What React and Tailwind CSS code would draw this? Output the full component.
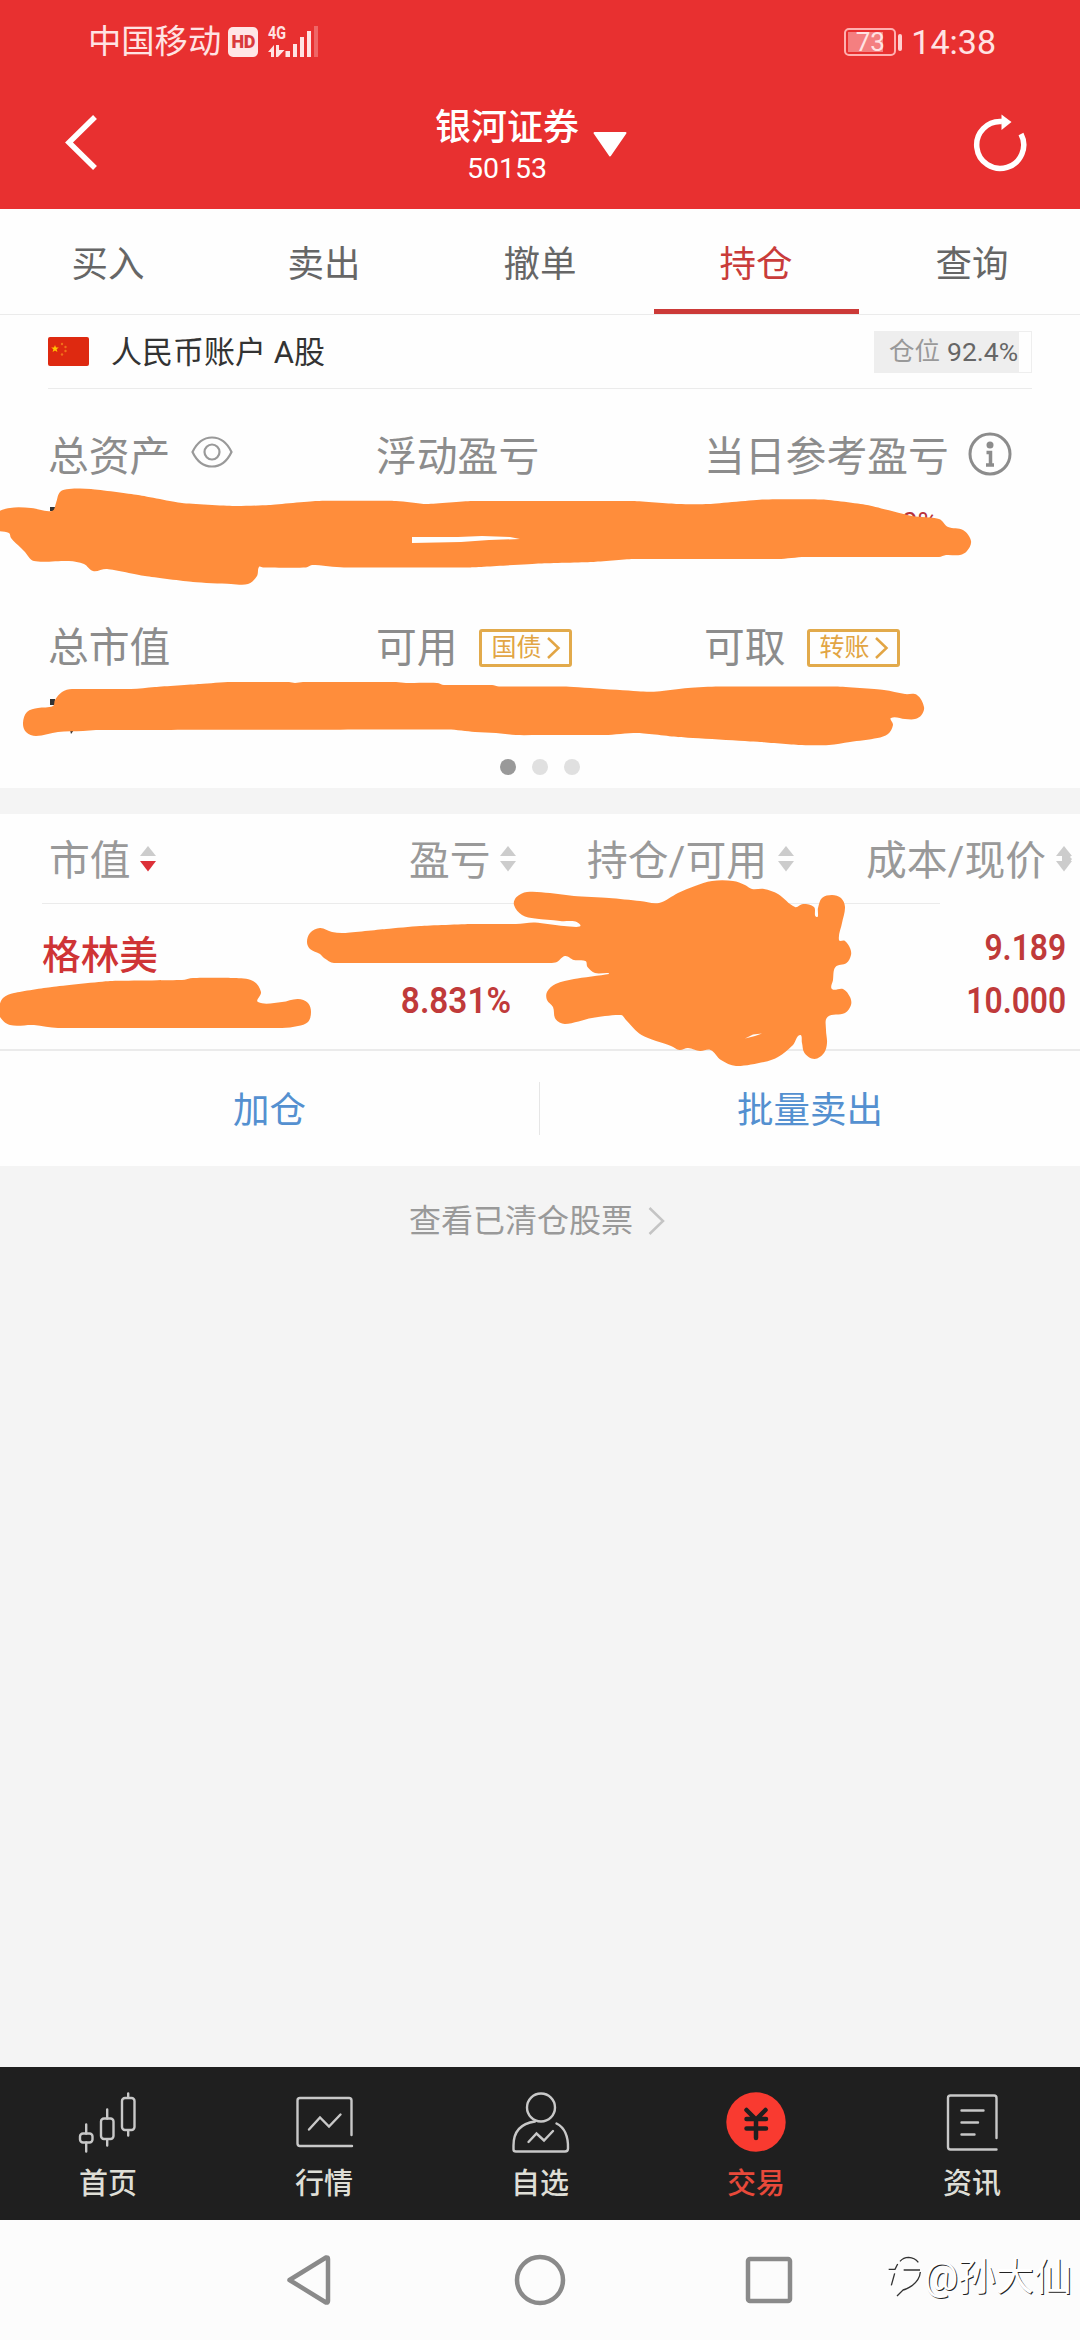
import React from 'react';
import clsx from 'clsx';

const tabs = ['买入', '卖出', '撤单', '持仓', '查询'];

// closed outlines of the pen marks, in page pixels
const marks = [
	[[-4, 514], [10, 508], [31, 508], [52, 511], [56, 503], [60, 492], [69, 489], [91, 489], [138, 495], [182, 503], [234, 506], [269, 505], [317, 501], [396, 501], [427, 504], [472, 501], [633, 501], [678, 504], [709, 504], [764, 499.5], [822, 499.5], [867, 505], [912, 516], [939, 519], [948, 527], [963, 530], [971, 541], [967, 551], [960, 555], [946, 555], [939, 557], [805, 557], [778, 559], [633, 559], [592, 562], [540, 563.5], [468, 567.5], [344, 567.5], [312, 565], [306, 567.5], [263, 567.5], [259, 567], [257, 576], [248, 584], [231, 584], [193, 582], [145, 576], [107, 569], [93, 571], [84, 564], [69, 561], [34, 561], [24, 551], [21, 548], [11, 538], [9, 533], [-4, 529]],
	[[23, 723], [27, 712], [38, 708], [53, 706], [55, 700], [62, 692], [72, 689], [131, 689], [155, 687], [200, 684], [231, 682], [289, 682], [295, 683], [303, 682], [396, 682], [406, 683], [437, 683], [444, 685], [492, 685], [499, 686.5], [564, 686.5], [643, 691.5], [657, 691.5], [688, 688], [719, 686.5], [836, 686.5], [884, 690], [905, 694], [917, 695], [924, 707], [921.5, 715], [915, 719], [905, 719], [891, 718], [893, 725], [888, 734], [877.5, 738], [850, 742], [829, 745], [802, 745], [760, 742], [678, 737], [638, 733], [605, 735], [540, 735], [516, 735], [496, 733], [475, 732], [448, 729.5], [96, 730], [83, 731], [58, 732], [36, 736], [26, 732]],
	[[-1, 1008], [3, 998], [14, 993], [52, 987], [110, 981], [182, 980], [193, 978], [234, 978], [253, 981], [261, 992], [258, 1002], [282, 1002], [298, 999], [308, 1003], [311, 1012], [308, 1022], [298, 1026], [282, 1028], [58, 1028], [34, 1025], [10, 1025], [0, 1017]],
	[[307, 942], [310, 933], [320, 928], [332, 932], [344, 933], [386, 929], [420, 926], [472, 924], [516, 924], [535, 922.5], [564, 926], [580, 924.5], [560, 921], [535, 918.5], [522, 915], [514, 905], [516.5, 897], [527, 892], [550, 893], [574, 896], [609, 898], [640, 901], [659, 903], [678, 893], [695, 886], [712, 881], [733, 881], [745, 885], [752, 889], [764, 889], [778, 894], [795, 907], [803, 904], [814, 907], [816.5, 917], [818, 908], [822, 898], [832, 895], [841, 898], [845, 907], [842, 923], [839, 940], [845, 941], [850, 948], [851, 955], [846.5, 963], [835.5, 967], [833, 980], [832, 989], [843, 989], [850, 997], [851, 1005], [845, 1013], [827.5, 1017], [826, 1030], [827, 1043], [824, 1053], [814.5, 1059], [804.5, 1053], [802, 1043], [800, 1035], [793, 1045], [778, 1057], [764, 1062], [736, 1066], [721, 1060], [710.5, 1050], [700, 1051], [688, 1048], [679.5, 1050], [671, 1046], [641.5, 1035], [626, 1020], [621, 1015], [592, 1018], [565, 1024], [555.5, 1019], [553, 1007], [547, 1000], [547, 992], [555.5, 984], [574, 979], [609, 974], [608, 973], [595, 973], [587.5, 967], [585.5, 961], [574, 960], [565, 956], [557, 962], [550, 963], [334, 963], [324, 958], [320, 954], [310, 949]]
];

const gaps = [
	'M412 537H458L482 536L510 537L520 539L489 540L461 542L412 543Z',
	'M745 1038.5L753 1034.5L762 1033.5L755 1036Z'
];

function smooth(points) {
	const n = points.length;
	let d = `M${points[0][0]} ${points[0][1]}`;
	for (let i = 0; i < n; i++) {
		const a = points[(i + n - 1) % n];
		const b = points[i];
		const c = points[(i + 1) % n];
		const e = points[(i + 2) % n];
		// keep the handles short so long and short segments join without bumps
		const len = Math.hypot(c[0] - b[0], c[1] - b[1]);
		const l1 = Math.hypot(c[0] - a[0], c[1] - a[1]) || 1;
		const l2 = Math.hypot(e[0] - b[0], e[1] - b[1]) || 1;
		const k = Math.min(len * 0.33, 8);
		d += `C${b[0] + ((c[0] - a[0]) / l1) * k} ${b[1] + ((c[1] - a[1]) / l1) * k} ${c[0] - ((e[0] - b[0]) / l2) * k} ${c[1] - ((e[1] - b[1]) / l2) * k} ${c[0]} ${c[1]}`;
	}
	return d + 'Z';
}

function PenMarks() {
	return (
		<svg className="pointer-events-none absolute top-0 left-0" width="1080" height="1100" viewBox="0 0 1080 1100">
			<path d="M50 507H58V511H50ZM50 699H55V705H50ZM70 730H74L71 734Z" fill="#333" />
			{marks.map((points, i) => (
				<path key={i} d={smooth(points)} fill="#ff8d3b" />
			))}
			{gaps.map((d) => (
				<path key={d} d={d} fill="#fefefe" />
			))}
		</svg>
	);
}

function StatusBar() {
	return (
		<div className="flex h-[84px] items-center pr-[84px] pl-[88px] text-[#ffe3e3]">
			<span className="text-[33.3px]">中国移动</span>
			<div className="ml-[7px] flex h-[30px] w-[30px] items-center justify-center rounded-[5px] bg-[#ffe6e6] text-[18px] leading-none font-black tracking-[-0.5px] text-[#d93a3c]">
				HD
			</div>
			<svg className="ml-[10px] overflow-visible" width="52" height="46" viewBox="268 18 52 46" fill="currentColor">
				<text x="268" y="38" fontSize="18" fontWeight="700" textLength="18" lengthAdjust="spacingAndGlyphs">
					4G
				</text>
				<path d="M268 51L274 44V56H271V51ZM276 44H279V49L284.500 49L278 56H276Z" />
				<path d="M285.500 50H290V56H285.500ZM293 43H297V56H293ZM300 36H304V56H300ZM307 30H311V56H307Z" />
				<path d="M314 25H318V56H314Z" opacity=".3" />
			</svg>
			<div className="ml-auto flex items-center">
				<div className="relative flex h-[28px] w-[52px] items-center justify-center rounded-[5px] border-2 border-[#ffb0b0]">
					<div className="absolute top-[2px] left-[2px] h-[20px] w-[35px] bg-[#f47f80]" />
					<span className="relative text-[26px] leading-none">73</span>
				</div>
				<div className="ml-[2px] h-[17px] w-[4px] rounded-full bg-[#ffd0d0]" />
				<span className="ml-[9px] text-[34px]">14:38</span>
			</div>
		</div>
	);
}

function Header() {
	return (
		<div className="flex h-[125px] items-start px-[54px] text-white">
			<svg className="mt-[29px] ml-[9px]" width="36" height="60" viewBox="62 113 36 60" fill="none" stroke="currentColor" strokeWidth="5.500">
				<path d="M94 117L68 142.500L94 168" />
			</svg>
			<div className="relative mt-[23px] ml-[336px] text-center">
				<div className="text-[36px] leading-[42px] font-medium">银河证券</div>
				<div className="mt-[2px] text-[28.500px] leading-[36px]">50153</div>
				<svg className="absolute top-[24px] left-[158px]" width="34" height="26" viewBox="0 0 34 26">
					<path d="M1.500 2H32.500L17 24.500Z" fill="currentColor" stroke="currentColor" strokeWidth="2" strokeLinejoin="round" />
				</svg>
			</div>
			<svg className="mt-[28px] -mr-[2px] ml-auto" width="56" height="62" viewBox="971 112 56 62" fill="none" stroke="currentColor" strokeWidth="5.500">
				<path d="M1020 134A23.500 23.500 0 1 1 1001 121.500" />
				<path d="M1000.500 114.500L1010.500 122L1000.500 130Z" fill="currentColor" stroke="none" />
			</svg>
		</div>
	);
}

function Tabs() {
	return (
		<div className="flex h-[106px] border-b border-[#ebebeb] text-[36.5px] text-[#666]">
			{tabs.map((tab) => (
				<div key={tab} className={clsx('flex flex-1 flex-col items-center', tab === '持仓' && 'text-[#c93c3a]')}>
					<div className="flex h-[100px] items-center pt-[12px]">{tab}</div>
					{tab === '持仓' && <div className="h-[5px] w-[205px] bg-[#cc3a38]" />}
				</div>
			))}
		</div>
	);
}

function Flag() {
	return (
		<svg width="41" height="29" viewBox="0 0 41 29">
			<rect width="41" height="29" rx="2" fill="#de2910" />
			<path d="M7 8L8 10.600H10.800L8.600 12.300L9.400 15L7 13.400L4.600 15L5.400 12.300L3.200 10.600H6Z" fill="#ffc400" />
			<g fill="#f0701a">
				<circle cx="14" cy="7" r="1.200" />
				<circle cx="17.500" cy="10" r="1.200" />
				<circle cx="17.500" cy="14" r="1.200" />
				<circle cx="14" cy="17.500" r="1.200" />
			</g>
		</svg>
	);
}

function Account() {
	return (
		<div className="mx-[48px] flex h-[74px] items-center border-b border-[#ebebeb]">
			<Flag />
			<span className="mt-[3px] ml-[22px] text-[31px] text-[#333]">人民币账户 A股</span>
			<div className="ml-auto h-[42px] w-[158px] border border-[#eee]">
				<div className="flex h-full w-[144px] items-center bg-[#eee] pl-[14px] text-[25.5px] whitespace-nowrap text-[#999]">
					仓位<span className="ml-[7px] text-[26.500px] text-[#666]">92.4%</span>
				</div>
			</div>
		</div>
	);
}

function LinkBadge({ children }) {
	return (
		<div className="-mt-[3px] ml-[21px] flex h-[38px] w-[93px] items-center rounded-[3px] border-[3px] border-[#e2aa4b] pl-[10px] text-[25px] text-[#e2a544]">
			{children}
			<svg className="ml-[4px]" width="15" height="24" viewBox="0 0 15 24" fill="none" stroke="currentColor" strokeWidth="2.500">
				<path d="M2 2L12.500 12L2 22" />
			</svg>
		</div>
	);
}

function Summary() {
	return (
		<div className="h-[399px] pl-[48px]">
			<div className="flex h-[137px] items-center text-[40.8px] text-[#8c8c8c]">
				<div className="flex w-[328px] items-center">
					总资产
					<svg className="mb-[12px] ml-[21px]" width="42" height="32" viewBox="0 0 42 32" fill="none" stroke="#999" strokeWidth="2.200">
						<path d="M1.500 16C6 6.500 13 1.500 21 1.500S36 6.500 40.500 16C36 25.500 29 30.500 21 30.500S6 25.500 1.500 16Z" />
						<ellipse cx="21" cy="16" rx="7.500" ry="7.500" />
					</svg>
				</div>
				<div className="w-[328px]">浮动盈亏</div>
				<div className="flex items-center">
					当日参考盈亏
					<svg className="mb-[8px] ml-[19px]" width="44" height="44" viewBox="0 0 44 44" fill="none" stroke="#8c8c8c" strokeWidth="3">
						<circle cx="22" cy="22" r="20" />
						<circle cx="22" cy="13" r="3.500" fill="#8c8c8c" stroke="none" />
						<path d="M18.500 20.500H22.500V33M18 33H26" strokeWidth="3.500" />
					</svg>
				</div>
			</div>
			<div className="flex h-[56px] justify-end pr-[142px] text-[28px] leading-[28px] text-[#b8323a]">
				<span className="-mt-[17px]">0%</span>
			</div>
			<div className="flex h-[132px] items-center pt-[2px] text-[40.8px] text-[#8c8c8c]">
				<div className="w-[328px]">总市值</div>
				<div className="flex w-[328px] items-center">
					可用<LinkBadge>国债</LinkBadge>
				</div>
				<div className="flex items-center">
					可取<LinkBadge>转账</LinkBadge>
				</div>
			</div>
			<div className="mt-[45px] -ml-[48px] flex justify-center gap-[16px]">
				<i className="h-[16px] w-[16px] rounded-full bg-[#999]" />
				<i className="h-[16px] w-[16px] rounded-full bg-[#e0e0e0]" />
				<i className="h-[16px] w-[16px] rounded-full bg-[#e0e0e0]" />
			</div>
		</div>
	);
}

function Sort({ active, squeezed, className }) {
	return (
		<svg className={clsx('mb-[5px] shrink-0', className)} width="16" height="26" viewBox="0 0 16 26">
			<path d="M8 0L16 10H0Z" fill="#ccc" />
			<path d="M0 15H16L8 25.500Z" fill={active ? '#dc3038' : '#ccc'} />
			{squeezed && <path d="M6 8H14L15 10L14 11L16 13L14 16H6Z" fill="#ccc" />}
		</svg>
	);
}

function Holdings() {
	return (
		<div className="bg-[#fefefe]">
			<div className="flex h-[89px] items-center pt-[6px] text-[40.8px] whitespace-nowrap text-[#999]">
				<div className="flex w-[361px] items-center pl-[49px]">
					市值
					<Sort active className="ml-[9px]" />
				</div>
				<div className="flex w-[226px] items-center pl-[48px]">
					盈亏
					<Sort className="ml-[9px]" />
				</div>
				<div className="flex w-[279px] items-center">
					持仓/可用
					<Sort className="ml-[11px]" />
				</div>
				<div className="flex items-center">
					成本/现价
					<Sort squeezed className="ml-[10px]" />
				</div>
			</div>
			<div className="ml-[42px] h-px w-[898px] bg-[#ebebeb]" />
			<div className="flex h-[145px] text-[37px] font-semibold text-[#c03a3a]">
				<div className="mt-[30px] w-[360px] pl-[42px] text-[38.7px] leading-[44px] font-medium text-[#cf3435]">格林美</div>
				<div className="mt-[75px] w-[151px] origin-right scale-x-[.9] text-right leading-[44px]">8.831%</div>
				<div className="mt-[17px] mr-[14px] ml-auto origin-right scale-x-[.86] text-right leading-[53px]">
					<div>9.189</div>
					<div>10.000</div>
				</div>
			</div>
			<div className="flex h-[117px] items-center border-t-2 border-[#ebebeb] text-[36.5px] text-[#5490d0]">
				<div className="w-[539px] pt-[5px] text-center">加仓</div>
				<div className="h-[53px] w-px bg-[#e6e6e6]" />
				<div className="flex-1 pt-[5px] text-center">批量卖出</div>
			</div>
		</div>
	);
}

const navItems = [
	{
		label: '首页',
		icon: (
			<g transform="translate(-78.500 -2091.500)">
				<rect x="80.500" y="2133" width="12.500" height="9" rx="3" />
				<rect x="101.500" y="2118" width="12.500" height="20.500" rx="3" />
				<rect x="122.500" y="2097.500" width="12.500" height="32" rx="3" />
				<path d="M86.700 2124V2133M86.700 2142V2151M107.700 2109V2118M107.700 2139V2145M128.700 2093V2097M128.700 2130V2135" />
			</g>
		)
	},
	{
		label: '行情',
		icon: (
			<g transform="translate(-294 -2091.500)">
				<path d="M351.500 2134.500V2100Q351.500 2097.500 349 2097.500H300Q297.500 2097.500 297.500 2100V2143Q297.500 2145.500 300 2145.500H352" />
				<path d="M309 2129L320 2117L329 2126L340.500 2114" />
			</g>
		)
	},
	{
		label: '自选',
		icon: (
			<g transform="translate(-510 -2091.500)">
				<ellipse cx="541" cy="2107" rx="14" ry="14" />
				<path d="M535 2121Q513.500 2124 513.500 2145V2149Q513.500 2151 516 2151H565Q568 2151 568 2148Q568.500 2129 556.500 2123" />
				<path d="M528.500 2141.500L536.500 2133L544 2140L553 2130.500" />
			</g>
		)
	},
	{
		label: '交易',
		active: true,
		icon: (
			<g>
				<circle cx="30" cy="30" r="29.700" fill="#f93a30" stroke="none" />
				<path d="M20.500 18L30 27.500L39.500 18M20.500 27H40M20.500 36.500H40M30 27V46" stroke="#1f1f1f" strokeWidth="4.500" />
			</g>
		)
	},
	{
		label: '资讯',
		icon: (
			<g transform="translate(-941.500 -2092)">
				<path d="M996 2138V2098Q996 2095.500 993.500 2095.500H950Q947.500 2095.500 947.500 2098V2147Q947.500 2149.500 950 2149.500H996" />
				<path d="M961 2110.500H983M961 2122.500H977.500M961 2134.500H974" />
			</g>
		)
	}
];

function BottomNav() {
	return (
		<div className="flex h-[153px] bg-[#1f1f1f] pt-[25px]">
			{navItems.map(({ label, icon, active }) => (
				<div key={label} className="flex flex-1 flex-col items-center">
					<svg className="overflow-visible" width="60" height="60" viewBox="0 0 60 60" fill="none" stroke="#c8c8c8" strokeWidth="2.400" strokeLinecap="round">
						{icon}
					</svg>
					<span className={clsx('mt-[12px] text-[29px] leading-[40px] font-medium', active ? 'text-[#e8493a]' : 'text-[#deded6]')}>{label}</span>
				</div>
			))}
		</div>
	);
}

function SystemNav() {
	return (
		<div className="relative flex h-[120px] items-center justify-center bg-[#fcfcfc]">
			<svg width="520" height="60" viewBox="280 2250 520 60" fill="none" stroke="#8a8a8a" strokeWidth="4.500" strokeLinejoin="round">
				<path d="M289.500 2280L326 2257.500Q328 2257 328 2259V2301Q328 2303 326 2302.500Z" />
				<circle cx="540" cy="2280" r="23" />
				<rect x="748" y="2259" width="42" height="42" rx="2" />
			</svg>
			<div className="absolute top-[32px] right-[8px] flex items-center text-[38px] leading-[50px] text-white [text-shadow:1px_1px_0.5px_#222]">
				<svg className="mr-[2px]" width="36" height="46" viewBox="44 62 108 138" fill="none" stroke="#333" strokeWidth="4">
					<path d="M52 108H71L79 92M86 84Q96 72 112 72Q130 73 141 87M70 120L60 156M97 110H146M147 116Q145 140 122 157Q105 168 95 170L77 188" />
				</svg>
				@孙大仙
			</div>
		</div>
	);
}

function App() {
	return (
		<div className="relative flex h-[2340px] w-[1080px] flex-col overflow-hidden bg-[#fefefe] font-[Roboto,'Noto_Sans_CJK_SC',sans-serif]">
			<div className="bg-[#e83030]">
				<StatusBar />
				<Header />
			</div>
			<Tabs />
			<Account />
			<Summary />
			<div className="h-[26px] bg-[#f4f4f4]" />
			<Holdings />
			<div className="flex flex-1 items-start justify-center bg-[#f4f4f4] pt-[31px] pr-[5px] text-[32px] text-[#999]">
				<div className="flex items-center">
					查看已清仓股票
					<svg className="ml-[15px]" width="18" height="30" viewBox="0 0 18 30" fill="none" stroke="#c4c4c4" strokeWidth="2.500">
						<path d="M1.500 2L15 15L1.500 28" />
					</svg>
				</div>
			</div>
			<BottomNav />
			<SystemNav />
			<PenMarks />
		</div>
	);
}

export default App;
